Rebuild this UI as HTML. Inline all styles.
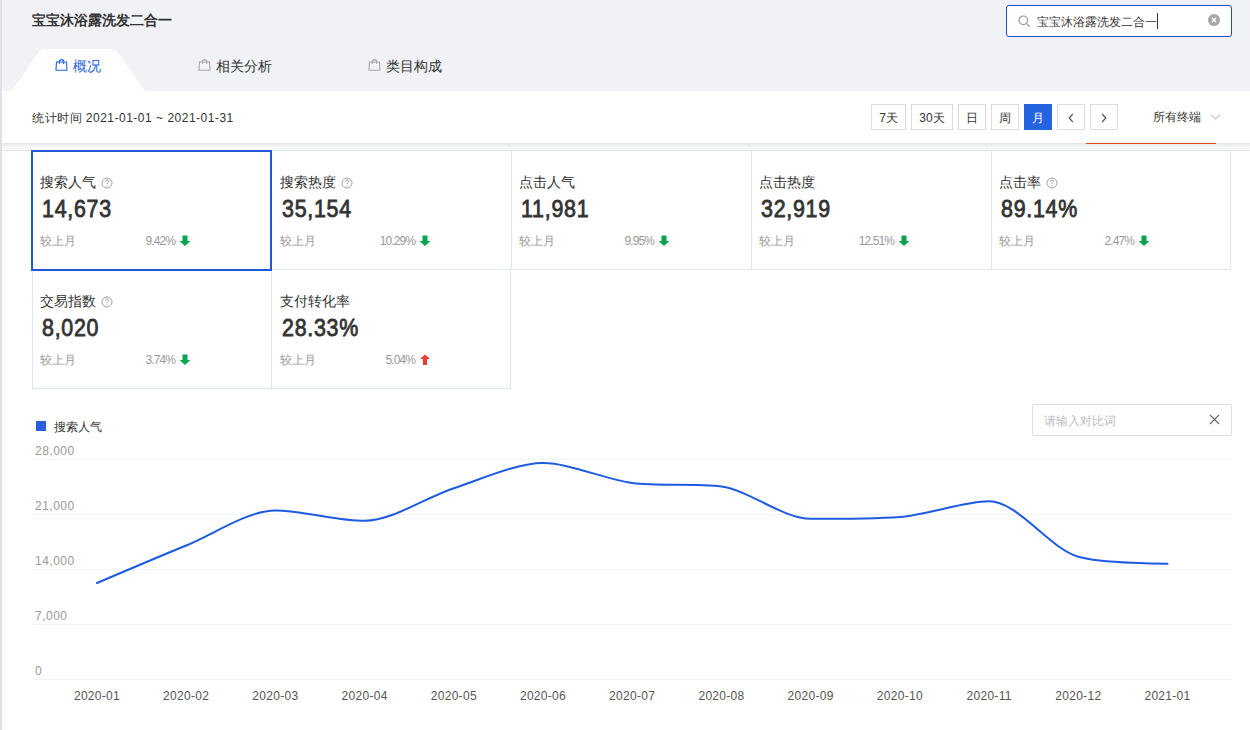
<!DOCTYPE html>
<html><head><meta charset="utf-8">
<style>
*{margin:0;padding:0;box-sizing:border-box}
html,body{width:1250px;height:730px;overflow:hidden;background:#fff;font-family:"Liberation Sans",sans-serif;color:#333}
.abs{position:absolute}
#strip{left:0;top:0;width:2px;height:730px;background:#dde0e6;z-index:5}
#hdr{left:0;top:0;width:1250px;height:91px;background:#f1f2f6}
#title{left:32px;top:11px;font-size:14px;font-weight:bold;color:#333;line-height:18px}
#search{left:1006px;top:5px;width:226px;height:32px;border:1px solid #1c4cc8;border-radius:3px;background:#fff}
#search .t{position:absolute;left:30px;top:8px;font-size:12px;line-height:16px;color:#333}
#caret{left:1157px;top:13px;width:1px;height:16px;background:#333}
#clr{left:1208px;top:14px;width:12px;height:12px;border-radius:50%;background:#a6a6a6}
#tab1{left:0;top:49px}
.tabt{font-size:14px;line-height:18px;top:57px}
#panel{left:0;top:91px;width:1250px;height:52px;background:#fff}
#shad{left:0;top:143px;width:1250px;height:7px;background:linear-gradient(#e3e3e3,#f3f3f3 40%,#fbfbfb)}
#shline{left:0;top:150px;width:1250px;height:1px;background:#e6e6e6}
#stat{left:32px;top:110px;font-size:12px;line-height:16px;color:#333;letter-spacing:0.5px}
.btn{top:104px;height:26px;border:1px solid #dcdcdc;background:#fff;font-size:12px;line-height:26px;text-align:center;color:#333}
.btn.on{background:#2563e0;border-color:#2563e0;color:#fff}
#term{left:1153px;top:109px;font-size:12px;line-height:16px;color:#333}
#orange{left:1086px;top:143px;width:130px;height:1px;background:#e04e17;z-index:2}
.card{width:240px;height:120px;border:1px solid transparent}
.card .lb{position:absolute;left:7px;top:23px;font-size:14px;line-height:16px;color:#333}
.card .num{position:absolute;left:9px;top:44px;font-size:23px;line-height:28px;font-weight:normal;-webkit-text-stroke:0.8px #333;color:#333;letter-spacing:0.8px;transform:scaleX(0.93);transform-origin:0 0}
.card .cmp{position:absolute;left:7px;top:82px;font-size:12px;line-height:16px;color:#999}
.card .pct{position:absolute;right:96px;top:82px;font-size:12px;line-height:16px;color:#999;letter-spacing:-0.9px}
.q{display:inline-block;vertical-align:-2px;margin-left:5px}
.card .arr{position:absolute;left:146px;top:84px}
#active{left:31px;top:150px;width:241px;height:121px;border:2px solid #2257db;z-index:3}
.ylab{left:35px;font-size:12px;line-height:14px;color:#999;letter-spacing:0.5px}
.grid{left:33px;width:1199px;height:1px;background:#f1f3f8}
.xlab{top:689px;font-size:12px;line-height:14px;color:#555;width:80px;text-align:center;letter-spacing:0.3px}
#cmpbox{left:1032px;top:404px;width:200px;height:32px;border:1px solid #dedede;border-radius:2px;background:#fff}
#cmpbox .t{position:absolute;left:11px;top:8px;font-size:12px;line-height:16px;color:#bcbcbc}
</style></head><body>
<div id="strip" class="abs"></div>
<div id="hdr" class="abs"></div>
<div id="title" class="abs">宝宝沐浴露洗发二合一</div>
<div id="search" class="abs"><svg class="abs" style="left:11px;top:9px" width="13" height="13" viewBox="0 0 13 13"><circle cx="5.3" cy="5.3" r="4.3" fill="none" stroke="#999" stroke-width="1.2"/><path d="M8.4 8.4 L11.8 11.8" stroke="#999" stroke-width="1.3"/></svg><span class="t">宝宝沐浴露洗发二合一</span></div>
<div id="caret" class="abs"></div>
<div id="clr" class="abs"><svg width="12" height="12" viewBox="0 0 12 12" style="display:block"><path d="M3.8 3.8 L8.2 8.2 M8.2 3.8 L3.8 8.2" stroke="#fff" stroke-width="1.3"/></svg></div>

<svg class="abs" style="left:0;top:48px" width="160" height="44" viewBox="0 0 160 44"><path d="M12 43 L37 6 Q41 1 47 1 L110 1 Q115 1 119 6 L145 43 Z" fill="#fff"/></svg>

<svg class="abs" style="left:55px;top:59px" width="13" height="12" viewBox="0 0 13 12"><path d="M1.5 3 H11.5 L12 11.2 H1 Z" fill="none" stroke="#2563e0" stroke-width="1.1"/><path d="M4.3 5 V2.8 Q4.3 0.6 6.5 0.6 Q8.7 0.6 8.7 2.8 V5" fill="none" stroke="#2563e0" stroke-width="1.1"/></svg>
<div class="abs tabt" style="left:73px;color:#2563e0">概况</div>
<svg class="abs" style="left:198px;top:59px" width="13" height="12" viewBox="0 0 13 12"><path d="M1.5 3 H11.5 L12 11.2 H1 Z" fill="none" stroke="#aaa" stroke-width="1.1"/><path d="M4.3 5 V2.8 Q4.3 0.6 6.5 0.6 Q8.7 0.6 8.7 2.8 V5" fill="none" stroke="#aaa" stroke-width="1.1"/></svg>
<div class="abs tabt" style="left:216px">相关分析</div>
<svg class="abs" style="left:368px;top:59px" width="13" height="12" viewBox="0 0 13 12"><path d="M1.5 3 H11.5 L12 11.2 H1 Z" fill="none" stroke="#aaa" stroke-width="1.1"/><path d="M4.3 5 V2.8 Q4.3 0.6 6.5 0.6 Q8.7 0.6 8.7 2.8 V5" fill="none" stroke="#aaa" stroke-width="1.1"/></svg>
<div class="abs tabt" style="left:386px">类目构成</div>

<div id="panel" class="abs"></div><div id="shad" class="abs"></div><div id="shline" class="abs"></div>
<div id="stat" class="abs">统计时间 2021-01-01 ~ 2021-01-31</div>
<div class="abs btn" style="left:871px;width:35px">7天</div>
<div class="abs btn" style="left:911px;width:42px">30天</div>
<div class="abs btn" style="left:958px;width:28px">日</div>
<div class="abs btn" style="left:991px;width:28px">周</div>
<div class="abs btn on" style="left:1024px;width:28px">月</div>
<div class="abs btn" style="left:1057px;width:28px"><svg width="8" height="12" viewBox="0 0 8 12" style="vertical-align:-2px"><path d="M5.8 2 L2.2 6 L5.8 10" fill="none" stroke="#555" stroke-width="1.2"/></svg></div>
<div class="abs btn" style="left:1090px;width:28px"><svg width="8" height="12" viewBox="0 0 8 12" style="vertical-align:-2px"><path d="M2.2 2 L5.8 6 L2.2 10" fill="none" stroke="#555" stroke-width="1.2"/></svg></div>
<div id="term" class="abs">所有终端</div>
<svg class="abs" style="left:1210px;top:113px" width="11" height="8" viewBox="0 0 11 8"><path d="M1 1.5 L5.5 6 L10 1.5" fill="none" stroke="#c8c8c8" stroke-width="1.1"/></svg>
<div id="orange" class="abs"></div>


<div class="abs card" style="left:32px;top:150px"><div class="lb">搜索人气<svg class="q" width="12" height="12" viewBox="0 0 12 12"><circle cx="6" cy="6" r="5" fill="none" stroke="#a3a3a3" stroke-width="1"/><path d="M4.4 4.6 Q4.4 3 6 3 Q7.6 3 7.6 4.4 Q7.6 5.3 6.6 5.8 Q6 6.1 6 7 V7.3" fill="none" stroke="#a3a3a3" stroke-width="1"/><circle cx="6" cy="8.9" r="0.6" fill="#a3a3a3"/></svg></div><div class="num">14,673</div><div class="cmp">较上月</div><div class="pct">9.42%</div><svg class="arr" width="12" height="12" viewBox="0 0 12 12"><path d="M3.5 0.5 H8.5 V6 H11.5 L6 11 L0.5 6 H3.5 Z" fill="#0aa350"/></svg></div>
<div class="abs card" style="left:272px;top:150px"><div class="lb">搜索热度<svg class="q" width="12" height="12" viewBox="0 0 12 12"><circle cx="6" cy="6" r="5" fill="none" stroke="#a3a3a3" stroke-width="1"/><path d="M4.4 4.6 Q4.4 3 6 3 Q7.6 3 7.6 4.4 Q7.6 5.3 6.6 5.8 Q6 6.1 6 7 V7.3" fill="none" stroke="#a3a3a3" stroke-width="1"/><circle cx="6" cy="8.9" r="0.6" fill="#a3a3a3"/></svg></div><div class="num">35,154</div><div class="cmp">较上月</div><div class="pct">10.29%</div><svg class="arr" width="12" height="12" viewBox="0 0 12 12"><path d="M3.5 0.5 H8.5 V6 H11.5 L6 11 L0.5 6 H3.5 Z" fill="#0aa350"/></svg></div>
<div class="abs card" style="left:511px;top:150px"><div class="lb">点击人气</div><div class="num">11,981</div><div class="cmp">较上月</div><div class="pct">9.95%</div><svg class="arr" width="12" height="12" viewBox="0 0 12 12"><path d="M3.5 0.5 H8.5 V6 H11.5 L6 11 L0.5 6 H3.5 Z" fill="#0aa350"/></svg></div>
<div class="abs card" style="left:751px;top:150px"><div class="lb">点击热度</div><div class="num">32,919</div><div class="cmp">较上月</div><div class="pct">12.51%</div><svg class="arr" width="12" height="12" viewBox="0 0 12 12"><path d="M3.5 0.5 H8.5 V6 H11.5 L6 11 L0.5 6 H3.5 Z" fill="#0aa350"/></svg></div>
<div class="abs card" style="left:991px;top:150px"><div class="lb">点击率<svg class="q" width="12" height="12" viewBox="0 0 12 12"><circle cx="6" cy="6" r="5" fill="none" stroke="#a3a3a3" stroke-width="1"/><path d="M4.4 4.6 Q4.4 3 6 3 Q7.6 3 7.6 4.4 Q7.6 5.3 6.6 5.8 Q6 6.1 6 7 V7.3" fill="none" stroke="#a3a3a3" stroke-width="1"/><circle cx="6" cy="8.9" r="0.6" fill="#a3a3a3"/></svg></div><div class="num">89.14%</div><div class="cmp">较上月</div><div class="pct">2.47%</div><svg class="arr" width="12" height="12" viewBox="0 0 12 12"><path d="M3.5 0.5 H8.5 V6 H11.5 L6 11 L0.5 6 H3.5 Z" fill="#0aa350"/></svg></div>
<div class="abs card" style="left:32px;top:269px"><div class="lb">交易指数<svg class="q" width="12" height="12" viewBox="0 0 12 12"><circle cx="6" cy="6" r="5" fill="none" stroke="#a3a3a3" stroke-width="1"/><path d="M4.4 4.6 Q4.4 3 6 3 Q7.6 3 7.6 4.4 Q7.6 5.3 6.6 5.8 Q6 6.1 6 7 V7.3" fill="none" stroke="#a3a3a3" stroke-width="1"/><circle cx="6" cy="8.9" r="0.6" fill="#a3a3a3"/></svg></div><div class="num">8,020</div><div class="cmp">较上月</div><div class="pct">3.74%</div><svg class="arr" width="12" height="12" viewBox="0 0 12 12"><path d="M3.5 0.5 H8.5 V6 H11.5 L6 11 L0.5 6 H3.5 Z" fill="#0aa350"/></svg></div>
<div class="abs card" style="left:272px;top:269px"><div class="lb">支付转化率</div><div class="num">28.33%</div><div class="cmp">较上月</div><div class="pct">5.04%</div><svg class="arr" width="12" height="12" viewBox="0 0 12 12"><path d="M4 11 H8 V5 H11 L6 0.5 L1 5 H4 Z" fill="#ee3a2f"/></svg></div>
<div class="abs" style="left:32px;top:150px;width:1199px;height:1px;background:#dde5ee"></div>
<div class="abs" style="left:32px;top:150px;width:1px;height:120px;background:#dde5ee"></div>
<div class="abs" style="left:271px;top:150px;width:1px;height:120px;background:#dde5ee"></div>
<div class="abs" style="left:511px;top:150px;width:1px;height:120px;background:#dde5ee"></div>
<div class="abs" style="left:751px;top:150px;width:1px;height:120px;background:#dde5ee"></div>
<div class="abs" style="left:991px;top:150px;width:1px;height:120px;background:#dde5ee"></div>
<div class="abs" style="left:1230px;top:150px;width:1px;height:120px;background:#dde5ee"></div>
<div class="abs" style="left:32px;top:269px;width:1199px;height:1px;background:#dde5ee"></div>
<div class="abs" style="left:32px;top:269px;width:1px;height:120px;background:#dde5ee"></div>
<div class="abs" style="left:271px;top:269px;width:1px;height:120px;background:#dde5ee"></div>
<div class="abs" style="left:510px;top:269px;width:1px;height:120px;background:#dde5ee"></div>
<div class="abs" style="left:32px;top:388px;width:479px;height:1px;background:#dde5ee"></div>
<div id="active" class="abs"></div>
<div class="abs" style="left:36px;top:421px;width:10px;height:10px;background:#2a5ddf"></div>
<div class="abs" style="left:54px;top:419px;font-size:12px;line-height:16px;color:#333">搜索人气</div>
<div id="cmpbox" class="abs"><span class="t">请输入对比词</span><svg class="abs" style="left:176px;top:9px" width="11" height="11" viewBox="0 0 11 11"><path d="M1 1 L10 10 M10 1 L1 10" stroke="#666" stroke-width="1.1"/></svg></div>
<div class="abs grid" style="top:459px"></div>
<div class="abs ylab" style="top:444px">28,000</div>
<div class="abs grid" style="top:514px"></div>
<div class="abs ylab" style="top:499px">21,000</div>
<div class="abs grid" style="top:569px"></div>
<div class="abs ylab" style="top:554px">14,000</div>
<div class="abs grid" style="top:624px"></div>
<div class="abs ylab" style="top:609px">7,000</div>
<div class="abs grid" style="top:679px"></div>
<div class="abs ylab" style="top:664px">0</div>
<div class="abs xlab" style="left:57.0px">2020-01</div>
<div class="abs xlab" style="left:146.2px">2020-02</div>
<div class="abs xlab" style="left:235.4px">2020-03</div>
<div class="abs xlab" style="left:324.6px">2020-04</div>
<div class="abs xlab" style="left:413.8px">2020-05</div>
<div class="abs xlab" style="left:503.0px">2020-06</div>
<div class="abs xlab" style="left:592.2px">2020-07</div>
<div class="abs xlab" style="left:681.5px">2020-08</div>
<div class="abs xlab" style="left:770.7px">2020-09</div>
<div class="abs xlab" style="left:859.9px">2020-10</div>
<div class="abs xlab" style="left:949.1px">2020-11</div>
<div class="abs xlab" style="left:1038.3px">2020-12</div>
<div class="abs xlab" style="left:1127.5px">2021-01</div>
<svg class="abs" style="left:0;top:0" width="1250" height="730" viewBox="0 0 1250 730"><path d="M97.00 583.00 C97.00 583.00 159.32 556.43 186.21 545.50 C212.84 534.68 247.79 510.50 275.42 510.50 C301.31 510.50 338.61 520.80 364.62 520.80 C392.14 520.80 426.74 496.96 453.83 488.20 C480.27 479.65 516.09 463.10 543.04 463.10 C569.62 463.10 605.17 479.45 632.25 483.00 C658.70 486.47 695.51 483.00 721.46 486.50 C749.03 490.22 783.08 518.80 810.67 518.80 C836.61 518.80 873.31 518.80 899.88 516.90 C926.84 514.97 964.30 501.30 989.08 501.30 C1017.82 501.30 1049.39 548.49 1078.29 556.70 C1102.92 563.70 1167.50 563.70 1167.50 563.70" fill="none" stroke="#1f5be0" stroke-width="2" stroke-linejoin="round" stroke-linecap="round"/></svg>
</body></html>
